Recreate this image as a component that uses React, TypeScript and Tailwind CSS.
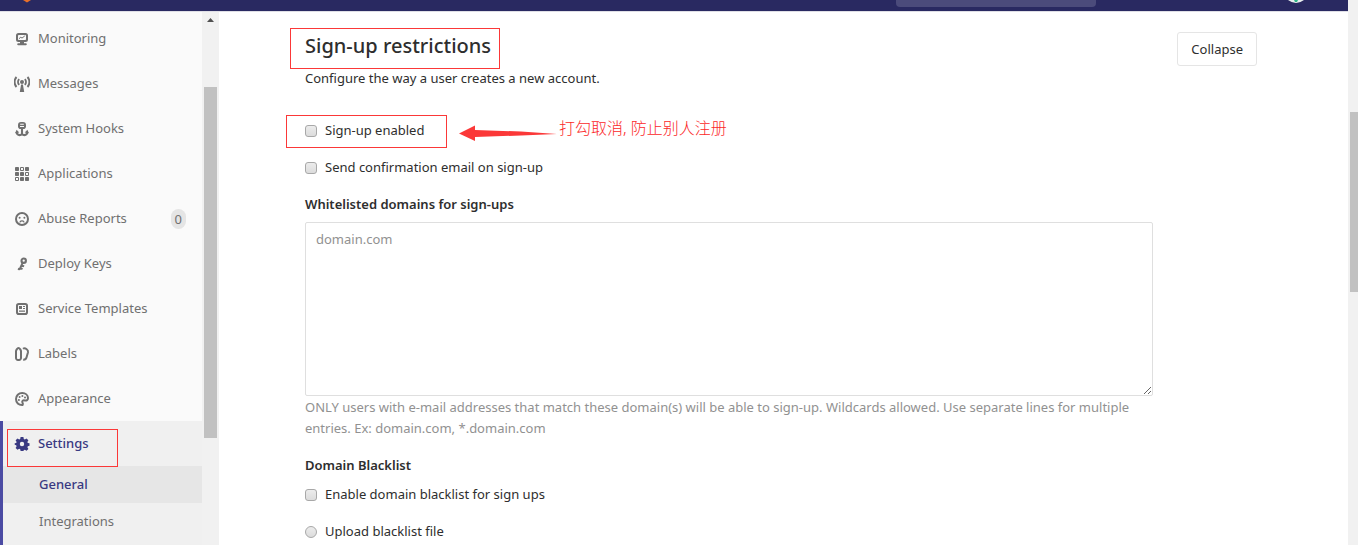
import type { ReactNode } from 'react';

const icons: Record<string, ReactNode> = {
  Monitoring: (
    <>
      <path
        fillRule="evenodd"
        d="M4.500 2h7A2.500 2.500 0 0 1 14 4.500v4a2.500 2.500 0 0 1-2.500 2.500H10v1.300h1.800a1 1 0 0 1 0 2H4.200a1 1 0 0 1 0-2H6V11H4.500A2.500 2.500 0 0 1 2 8.500v-4A2.500 2.500 0 0 1 4.500 2zm.3 2a.8.8 0 0 0-.8.8v3.400a.8.8 0 0 0 .8.8h6.400a.8.8 0 0 0 .8-.8V4.800a.8.8 0 0 0-.8-.8z"
      />
      <path d="M5 7.700l1.800-1.500 1.200.9 2.800-2.200" fill="none" stroke="currentColor" strokeWidth="1" />
    </>
  ),
  Messages: (
    <>
      <circle cx="8" cy="6" r="2" />
      <path d="M7.100 8.500h1.800L10.200 16H5.800z" />
      <path
        d="M5.200 3.200a4 4 0 0 0 0 5.600M10.800 3.200a4 4 0 0 1 0 5.600M2.500 1a7.500 7.500 0 0 0 0 10M13.500 1a7.500 7.500 0 0 1 0 10"
        fill="none"
        stroke="currentColor"
        strokeWidth="1.900"
      />
    </>
  ),
  'System Hooks': (
    <>
      <path
        fillRule="evenodd"
        d="M7 1h2a3 3 0 0 1 3 3v1.200A2.800 2.800 0 0 1 9.200 8H6.800A2.800 2.800 0 0 1 4 5.200V4a3 3 0 0 1 3-3zM6.200 2.800v.9h3.600v-.9zM6 5v1h4V5z"
      />
      <path
        d="M8 7v6.500M2.600 11.200c.3 2.200 1.400 2.900 2.900 2.900 1.300 0 2.100-.7 2.500-1.400.4.700 1.200 1.400 2.500 1.400 1.500 0 2.600-.7 2.900-2.900"
        fill="none"
        stroke="currentColor"
        strokeWidth="2.100"
      />
      <path d="M1 12.200l1.600-3.400L5.300 11.500zM15 12.200l-1.600-3.400-2.700 2.700z" />
    </>
  ),
  Applications: (
    <>
      <rect x="1" y="1" width="4" height="4" rx=".8" />
      <rect x="11" y="1" width="4" height="4" rx=".8" />
      <rect x="1" y="6" width="4" height="4" rx=".8" />
      <rect x="6" y="6" width="4" height="4" rx=".8" />
      <rect x="6" y="11" width="4" height="4" rx=".8" />
      <rect x="11" y="11" width="4" height="4" rx=".8" />
      <path d="M6.500 1.500h3v3h-3zM11.500 6.500h3v3h-3zM1.500 11.500h3v3h-3z" fill="none" stroke="currentColor" />
    </>
  ),
  'Abuse Reports': (
    <>
      <circle cx="8" cy="8" r="6" fill="none" stroke="currentColor" strokeWidth="2" />
      <circle cx="5.600" cy="6.800" r="1" />
      <circle cx="10.400" cy="6.800" r="1" />
      <path d="M6 11c.8-1.400 3.200-1.400 4 0" fill="none" stroke="currentColor" strokeWidth="1.200" strokeLinecap="round" />
    </>
  ),
  'Deploy Keys': (
    <>
      <circle cx="9.700" cy="4.700" r="2.200" fill="none" stroke="currentColor" strokeWidth="2.100" />
      <path
        d="M8.600 6.800l-3.100 6.900M7.600 9.300l2.500 1.100M6 11.800l2.500 1.300M4 12.600l1.700.9"
        fill="none"
        stroke="currentColor"
        strokeWidth="2"
      />
    </>
  ),
  'Service Templates': (
    <>
      <rect x="3" y="3" width="10" height="10" rx="1.800" fill="none" stroke="currentColor" strokeWidth="2" />
      <path d="M5 5h3v3H5zM9 5h2v1H9zM9 7h2v1H9zM5 9.500h6v1.300H5z" />
    </>
  ),
  Labels: (
    <path
      d="M2 5.300c0-1 1.200-3.200 2.500-3.200S7 4.300 7 5.300V12a1.900 1.900 0 0 1-1.900 1.900H3.900A1.900 1.900 0 0 1 2 12zM9 2.800c1-.7 2.100-.7 3.400.2 1.200.9 1.900 1.900 1.600 3.200l-1.500 5.400c-.4 1.500-1.600 2.300-3.300 2.200"
      fill="none"
      stroke="currentColor"
      strokeWidth="2"
    />
  ),
  Appearance: (
    <>
      <path
        d="M8.600 14c-4 .3-6.600-2.400-6.600-5.900C2 4.700 4.600 2 8.200 2 11.500 2 14 4.100 14 6.900c0 2.200-1.500 3-3.100 2.600-2-.5-3.100.6-2.500 2 .3.800 1 1.400.2 2.500z"
        fill="none"
        stroke="currentColor"
        strokeWidth="2"
      />
      <circle cx="4.900" cy="8.900" r="1" />
      <circle cx="5.600" cy="5.900" r="1" />
      <circle cx="8.400" cy="4.900" r="1" />
      <circle cx="11" cy="6.500" r="1" />
    </>
  ),
  Settings: (
    <path
      fillRule="evenodd"
      d="M6.600 1h2.800l.4 1.900 1 .5 1.700-1 1.900 1.900-1 1.700.4.900 1.700.4v2.500l-1.700.5-.4 1 1 1.600-1.900 1.900-1.700-1-1 .5L9.400 15H6.600l-.4-1.700-1-.5-1.700 1-1.900-1.900 1-1.600-.4-1L.7 8.800V7.300l1.500-.4.4-.9-1-1.700 1.900-1.900 1.700 1 1-.5zM8 5.800a2.200 2.200 0 1 0 0 4.400 2.200 2.200 0 0 0 0-4.400z"
    />
  ),
};

function Icon({ name }: { name: string }) {
  return (
    <svg viewBox="0 0 16 16" className="size-4 shrink-0" fill="currentColor" aria-hidden="true">
      {icons[name]}
    </svg>
  );
}

const links = [
  'Monitoring',
  'Messages',
  'System Hooks',
  'Applications',
  'Abuse Reports',
  'Deploy Keys',
  'Service Templates',
  'Labels',
  'Appearance',
];

function Sidebar() {
  return (
    <aside className="flex w-[220px] shrink-0 overflow-hidden">
      <nav className="flex min-w-0 grow flex-col bg-[#fafafa] pt-1 text-[#707070]">
        <ul>
          {links.map((name) => (
            <li key={name}>
              <a href="#" className="flex h-[45px] items-center gap-2 pr-4 pl-3.5">
                <Icon name={name} />
                <span className="grow">{name}</span>
                {name === 'Abuse Reports' && (
                  <span className="rounded-full bg-[#e5e5e5] px-1 leading-5">0</span>
                )}
              </a>
            </li>
          ))}
        </ul>
        <div className="grow border-l-3 border-[#4b4ba3] bg-[#f0f0f0]">
          <a href="#" className="relative flex h-[45px] items-center gap-2 pl-[11px] font-medium text-[#393982]">
            <Icon name="Settings" />
            Settings
            <span className="absolute top-2 left-1 h-[38px] w-[111px] border border-[#fb3838]" />
          </a>
          <a href="#" className="flex h-[37px] items-center bg-[#e6e6e6] pl-9 font-medium text-[#393982]">
            General
          </a>
          <a href="#" className="flex h-[37px] items-center pl-9">
            Integrations
          </a>
        </div>
      </nav>
      <div className="mr-px flex w-[17px] shrink-0 flex-col items-center bg-[#f1f1f1]">
        <svg viewBox="0 0 17 17" className="h-[75px] w-[17px]" preserveAspectRatio="xMidYMin" aria-hidden="true">
          <path d="M5 10l3.500-4 3.500 4z" fill="#505050" />
        </svg>
        <div className="h-[351px] w-[13px] bg-[#c1c1c1]" />
      </div>
    </aside>
  );
}

function Choice({ type, children }: { type: 'checkbox' | 'radio'; children: string }) {
  return (
    <label className="flex w-fit items-center gap-2">
      <input
        type={type}
        className={
          (type === 'radio' ? 'rounded-full' : 'rounded-[3px]') +
          ' size-3 appearance-none border border-[#a8a8a8] bg-linear-to-b from-[#ececec] to-[#dcdcdc]'
        }
      />
      {children}
    </label>
  );
}

export default function App() {
  return (
    <div className="flex h-screen overflow-hidden bg-white font-['Noto_Sans','Noto_Sans_CJK_SC',sans-serif] text-[13px] leading-[21px] text-[#2e2e2e]">
      <div className="flex min-w-0 grow flex-col">
        <header className="flex h-3 shrink-0 items-start border-b border-[#dfdfe6] bg-[#292961]">
          <svg viewBox="0 0 16 4" className="ml-[19px] h-1 w-4" aria-hidden="true">
            <path d="M4 0h8L8 2.500z" fill="#e8702a" />
          </svg>
          <div className="mr-48 ml-auto h-[7px] w-[200px] rounded-b bg-[#4b4b7b]" />
          <svg viewBox="0 0 16 4" className="mr-11 h-1 w-4" aria-hidden="true">
            <path d="M0 0h16q-8 6-16 0z" fill="#e8eeee" />
            <path d="M6 0h4l-1 2H7z" fill="#2fb587" />
          </svg>
        </header>
        <div className="flex min-h-0 grow">
          <Sidebar />
          <main className="min-w-0 grow">
            <div className="mx-auto max-w-[990px] pt-5 pr-[22px] pl-4">
              <div className="flex items-start justify-between">
                <div>
                  <h4 className="relative w-fit text-xl leading-7 font-medium">
                    Sign-up restrictions
                    <span className="absolute -top-1 -right-[9px] -bottom-[9px] -left-[15px] border border-[#fb3838]" />
                  </h4>
                  <p className="mt-2">Configure the way a user creates a new account.</p>
                </div>
                <button type="button" className="h-[34px] rounded-[3px] border border-[#e5e5e5] bg-white px-[13px]">
                  Collapse
                </button>
              </div>
              <form className="mt-[31px]">
                <div className="relative w-fit">
                  <Choice type="checkbox">Sign-up enabled</Choice>
                  <span className="pointer-events-none absolute -top-[5px] -right-[23px] -bottom-[7px] -left-[19px] border border-[#fb3838]" />
                  <div className="absolute top-0 left-[154px] flex items-start text-base leading-4 font-light whitespace-nowrap text-[#fb2828]">
                    <svg viewBox="0 0 100 20" className="mt-[5px] h-5 w-[100px]" aria-hidden="true">
                      <path d="M0 8.500L16 0.500v4.500L62 6.500 98 9 62 10.500 16 12v4z" fill="#fb3838" />
                    </svg>
                    打勾取消, 防止别人注册
                  </div>
                </div>
                <div className="mt-4">
                  <Choice type="checkbox">Send confirmation email on sign-up</Choice>
                </div>
                <label htmlFor="whitelist" className="mt-4 block font-semibold">
                  Whitelisted domains for sign-ups
                </label>
                <textarea
                  id="whitelist"
                  placeholder="domain.com"
                  className="mt-[7px] block h-[174px] w-full max-w-[848px] rounded-[2px] border border-[#dfdfdf] px-2.5 py-1.5 placeholder:text-[#919191]"
                />
                <p className="mt-px max-w-[848px] text-[#919191]">
                  ONLY users with e-mail addresses that match these domain(s) will be able to sign-up. Wildcards
                  allowed. Use separate lines for multiple entries. Ex: domain.com, *.domain.com
                </p>
                <fieldset className="mt-4">
                  <legend className="font-semibold">Domain Blacklist</legend>
                  <div className="mt-2">
                    <Choice type="checkbox">Enable domain blacklist for sign ups</Choice>
                  </div>
                  <div className="mt-4">
                    <Choice type="radio">Upload blacklist file</Choice>
                  </div>
                </fieldset>
              </form>
            </div>
          </main>
        </div>
      </div>
      <div className="w-2.5 shrink-0 bg-[#f1f1f1] pt-28 pl-0.5">
        <div className="h-[180px] bg-[#c1c1c1]" />
      </div>
    </div>
  );
}
